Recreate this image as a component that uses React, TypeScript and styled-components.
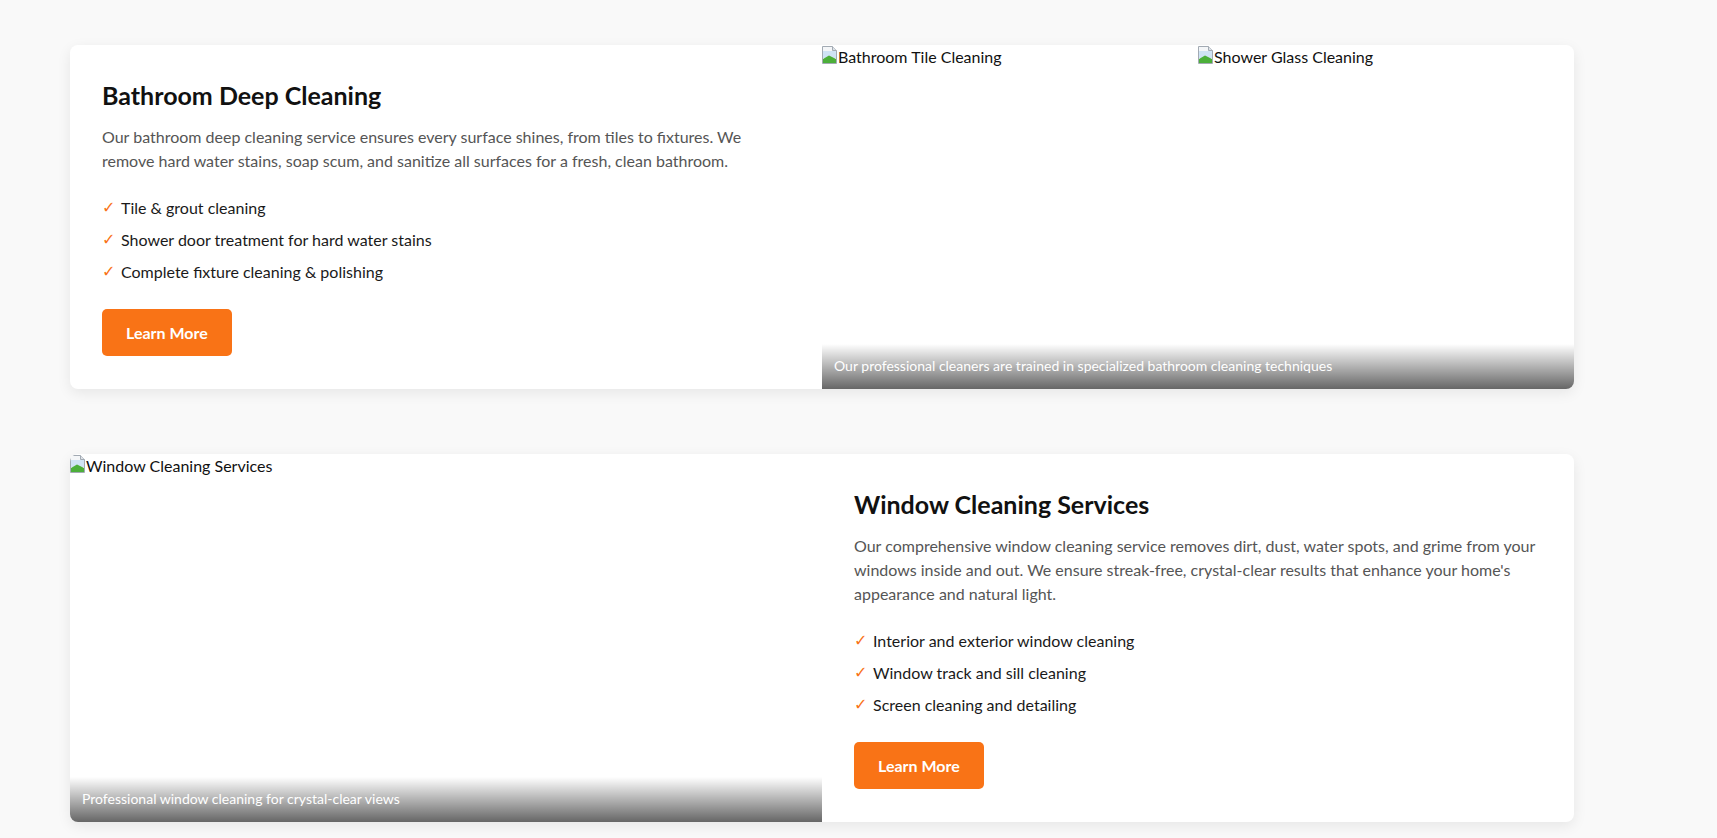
import React from "react";
import styled, { createGlobalStyle } from "styled-components";

const Global = createGlobalStyle`
  html, body { margin: 0; padding: 0; background: #f9f9f9; }
  body { font-family: Lato, "Liberation Sans", Arial, sans-serif; color: #111; }
  * { box-sizing: border-box; }
`;

const Page = styled.main`
  padding: 45px 0 40px 70px;
  display: flex;
  flex-direction: column;
  gap: 65px;
`;

const Card = styled.section`
  width: 1504px;
  display: grid;
  grid-template-columns: 1fr 1fr;
  background: #fff;
  border-radius: 8px;
  overflow: hidden;
  box-shadow: 0 4px 14px rgba(0, 0, 0, 0.08);
`;

const Content = styled.div`
  padding: 32px 32px 33px;
`;

const Title = styled.h2`
  margin: 0 0 12px;
  font-size: 25px;
  line-height: 36px;
  font-weight: 700;
  color: #111;
`;

const Text = styled.p`
  margin: 0 0 23px;
  font-size: 16px;
  line-height: 24px;
  color: #555;
`;

const List = styled.ul`
  list-style: none;
  margin: 0 0 25px;
  padding: 0;
`;

const Item = styled.li`
  display: flex;
  align-items: center;
  gap: 7px;
  font-size: 16px;
  line-height: 24px;
  color: #1a1a1a;
  margin-bottom: 8px;
`;

const Check = styled.span`
  color: #f97316;
  font-family: "DejaVu Sans", sans-serif;
  font-size: 16px;
  line-height: 24px;
  width: 12px;
`;

const Button = styled.button`
  border: 0;
  border-radius: 5px;
  background: #f97316;
  color: #fff;
  font-family: inherit;
  font-weight: 700;
  font-size: 16px;
  line-height: 23px;
  padding: 12px 24px;
  cursor: pointer;
`;

const Media = styled.div<{ $cols: number }>`
  position: relative;
  display: grid;
  grid-template-columns: repeat(${(p) => p.$cols}, 1fr);
  min-height: 100%;
`;

const Broken = styled.div`
  display: flex;
  align-items: flex-start;
  font-size: 16px;
  line-height: 24px;
  color: #111;
`;

const IconBox = styled.span`
  display: flex;
  padding-top: 1px;
`;

const Caption = styled.div`
  position: absolute;
  left: 0;
  right: 0;
  bottom: 0;
  padding: 12px 12px 13px;
  font-size: 14px;
  line-height: 20px;
  color: #fff;
  background: linear-gradient(to bottom, rgba(0, 0, 0, 0), rgba(0, 0, 0, 0.6));
`;

const BrokenIcon = () => (
  <svg width="16" height="18" viewBox="0 0 16 18" aria-hidden>
    <path d="M0.5 0.5h10l4 4v13h-14z" fill="#f4f6f8" stroke="#a2aab3" />
    <path d="M10.5 0.5v4h4" fill="#dde2e7" stroke="#a2aab3" />
    <rect x="1" y="5" width="13" height="7" fill="#cfe3f5" />
    <path d="M1 17 L1 13 L7 9.5 L14 13 L14 17 Z" fill="#4caf3a" />
  </svg>
);

const Img = ({ alt }: { alt: string }) => (
  <Broken>
    <IconBox>
      <BrokenIcon />
    </IconBox>
    <span>{alt}</span>
  </Broken>
);

type Svc = {
  title: string;
  text: string;
  items: string[];
};

const Info = ({ s }: { s: Svc }) => (
  <Content>
    <Title>{s.title}</Title>
    <Text>{s.text}</Text>
    <List>
      {s.items.map((i) => (
        <Item key={i}>
          <Check>✓</Check>
          {i}
        </Item>
      ))}
    </List>
    <Button>Learn More</Button>
  </Content>
);

const bathroom: Svc = {
  title: "Bathroom Deep Cleaning",
  text:
    "Our bathroom deep cleaning service ensures every surface shines, from tiles to fixtures. We remove hard water stains, soap scum, and sanitize all surfaces for a fresh, clean bathroom.",
  items: [
    "Tile & grout cleaning",
    "Shower door treatment for hard water stains",
    "Complete fixture cleaning & polishing",
  ],
};

const windows: Svc = {
  title: "Window Cleaning Services",
  text:
    "Our comprehensive window cleaning service removes dirt, dust, water spots, and grime from your windows inside and out. We ensure streak-free, crystal-clear results that enhance your home's appearance and natural light.",
  items: [
    "Interior and exterior window cleaning",
    "Window track and sill cleaning",
    "Screen cleaning and detailing",
  ],
};

export default function App() {
  return (
    <>
      <Global />
      <Page>
        <Card>
          <Info s={bathroom} />
          <Media $cols={2}>
            <Img alt="Bathroom Tile Cleaning" />
            <Img alt="Shower Glass Cleaning" />
            <Caption>Our professional cleaners are trained in specialized bathroom cleaning techniques</Caption>
          </Media>
        </Card>
        <Card>
          <Media $cols={1}>
            <Img alt="Window Cleaning Services" />
            <Caption>Professional window cleaning for crystal-clear views</Caption>
          </Media>
          <Info s={windows} />
        </Card>
      </Page>
    </>
  );
}
